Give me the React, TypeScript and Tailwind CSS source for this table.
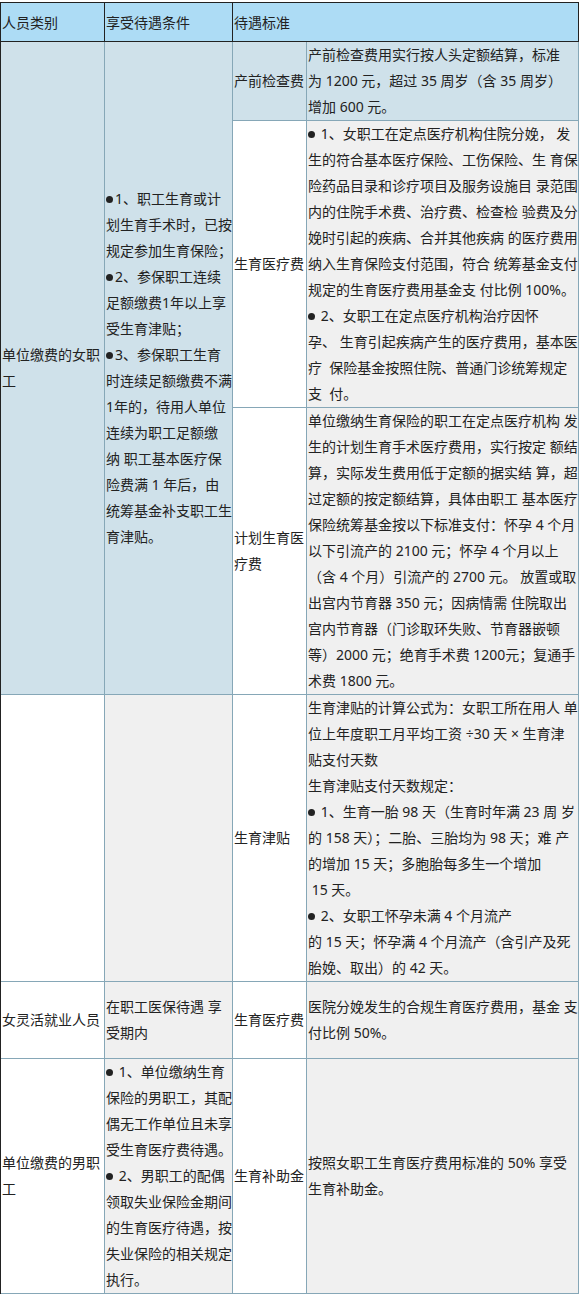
import React from "react";

// 生育保险待遇一览表
type Cell = {
  lines: string[];
  bg: string;
  rowSpan?: number;
  colSpan?: number;
};

type Row = { h: string; cells: Cell[] };

const BLUE = "bg-[#cfe1ea]";
const WHITE = "bg-white";
const GRAY = "bg-[#f0f0f0]";

const rows: Row[] = [
  {
    h: "h-[79px]",
    cells: [
      { lines: ["单位缴费的女职", "工"], bg: BLUE, rowSpan: 3 },
      {
        lines: [
          "●1、职工生育或计",
          "划生育手术时，已按",
          "规定参加生育保险；",
          "●2、参保职工连续",
          "足额缴费1年以上享",
          "受生育津贴；",
          "●3、参保职工生育",
          "时连续足额缴费不满",
          "1年的，待用人单位",
          "连续为职工足额缴",
          "纳 职工基本医疗保",
          "险费满 1 年后，由",
          "统筹基金补支职工生",
          "育津贴。",
        ],
        bg: BLUE,
        rowSpan: 3,
      },
      { lines: ["产前检查费"], bg: BLUE },
      {
        lines: [
          "产前检查费用实行按人头定额结算，标准",
          "为 1200 元，超过 35 周岁（含 35 周岁）",
          "增加 600 元。",
        ],
        bg: BLUE,
      },
    ],
  },
  {
    h: "h-[287px]",
    cells: [
      { lines: ["生育医疗费"], bg: WHITE },
      {
        lines: [
          "● 1、女职工在定点医疗机构住院分娩， 发",
          "生的符合基本医疗保险、工伤保险、生 育保",
          "险药品目录和诊疗项目及服务设施目 录范围",
          "内的住院手术费、治疗费、检查检 验费及分",
          "娩时引起的疾病、合并其他疾病 的医疗费用",
          "纳入生育保险支付范围，符合 统筹基金支付",
          "规定的生育医疗费用基金支 付比例 100%。",
          "● 2、女职工在定点医疗机构治疗因怀",
          "孕、 生育引起疾病产生的医疗费用，基本医",
          "疗  保险基金按照住院、普通门诊统筹规定",
          "支  付。",
        ],
        bg: GRAY,
      },
    ],
  },
  {
    h: "h-[287px]",
    cells: [
      { lines: ["计划生育医", "疗费"], bg: WHITE },
      {
        lines: [
          "单位缴纳生育保险的职工在定点医疗机构 发",
          "生的计划生育手术医疗费用，实行按定 额结",
          "算，实际发生费用低于定额的据实结 算，超",
          "过定额的按定额结算，具体由职工 基本医疗",
          "保险统筹基金按以下标准支付：怀孕 4 个月",
          "以下引流产的 2100 元；怀孕 4 个月以上",
          "（含 4 个月）引流产的 2700 元。 放置或取",
          "出宫内节育器 350 元；因病情需 住院取出",
          "宫内节育器（门诊取环失败、节育器嵌顿",
          "等）2000 元；绝育手术费 1200元；复通手",
          "术费 1800 元。",
        ],
        bg: GRAY,
      },
    ],
  },
  {
    h: "h-[287px]",
    cells: [
      { lines: [], bg: WHITE },
      { lines: [], bg: GRAY },
      { lines: ["生育津贴"], bg: WHITE },
      {
        lines: [
          "生育津贴的计算公式为：女职工所在用人 单",
          "位上年度职工月平均工资 ÷30 天 × 生育津",
          "贴支付天数",
          "生育津贴支付天数规定：",
          "● 1、生育一胎 98 天（生育时年满 23 周 岁",
          "的 158 天）；二胎、三胎均为 98 天；难 产",
          "的增加 15 天；多胞胎每多生一个增加",
          " 15 天。",
          "● 2、女职工怀孕未满 4 个月流产",
          "的 15 天；怀孕满 4 个月流产（含引产及死",
          "胎娩、取出）的 42 天。",
        ],
        bg: GRAY,
      },
    ],
  },
  {
    h: "h-[77px]",
    cells: [
      { lines: ["女灵活就业人员"], bg: WHITE },
      { lines: ["在职工医保待遇 享", "受期内"], bg: GRAY },
      { lines: ["生育医疗费"], bg: WHITE },
      {
        lines: ["医院分娩发生的合规生育医疗费用，基金 支", "付比例 50%。"],
        bg: GRAY,
      },
    ],
  },
  {
    h: "h-[235px]",
    cells: [
      { lines: ["单位缴费的男职", "工"], bg: WHITE },
      {
        lines: [
          "● 1、单位缴纳生育",
          "保险的男职工，其配",
          "偶无工作单位且未享",
          "受生育医疗费待遇。",
          "● 2、男职工的配偶",
          "领取失业保险金期间",
          "的生育医疗待遇，按",
          "失业保险的相关规定",
          "执行。",
        ],
        bg: GRAY,
      },
      { lines: ["生育补助金"], bg: WHITE },
      {
        lines: ["按照女职工生育医疗费用标准的 50% 享受", "生育补助金。"],
        bg: GRAY,
      },
    ],
  },
];

// the bullet in the source is a small round dot, narrower than the CJK one
const Line = ({ text }: { text: string }) => {
  if (!text.startsWith("●")) return <div className="whitespace-pre">{text}</div>;
  return (
    <div className="whitespace-pre">
      <span className="mr-[2px] inline-block size-[7px] rounded-full bg-[#222] align-[1px]" />
      {text.slice(1)}
    </div>
  );
};

export default function App() {
  return (
    <div className="min-h-[1295px] bg-white pt-[2px] font-['Noto_Sans','Noto_Sans_CJK_SC',sans-serif] text-[14px] text-[#222]">
      <table className="w-[579px] table-fixed border-separate border-spacing-0 border-l border-t border-[#222]">
        <colgroup>
          <col className="w-[104px]" />
          <col className="w-[128px]" />
          <col className="w-[74px]" />
          <col className="w-[272px]" />
        </colgroup>
        <thead>
          <tr className="h-[39px] bg-[#addcf5] text-left">
            <th className="border-b border-r border-[#222] pl-px font-normal">人员类别</th>
            <th className="border-b border-r border-[#222] pl-px font-normal">享受待遇条件</th>
            <th colSpan={2} className="border-b border-r border-[#222] pl-px font-normal">
              待遇标准
            </th>
          </tr>
        </thead>
        <tbody>
          {rows.map((row, ri) => (
            <tr key={ri} className={row.h}>
              {row.cells.map((c, ci) => (
                <td
                  key={ci}
                  rowSpan={c.rowSpan}
                  colSpan={c.colSpan}
                  className={`${c.bg} border-b border-r border-[#86a7b7] p-0 pl-px align-middle leading-[26px]`}
                >
                  {c.lines.map((l, i) => (
                    <Line key={i} text={l} />
                  ))}
                </td>
              ))}
            </tr>
          ))}
        </tbody>
      </table>
    </div>
  );
}
